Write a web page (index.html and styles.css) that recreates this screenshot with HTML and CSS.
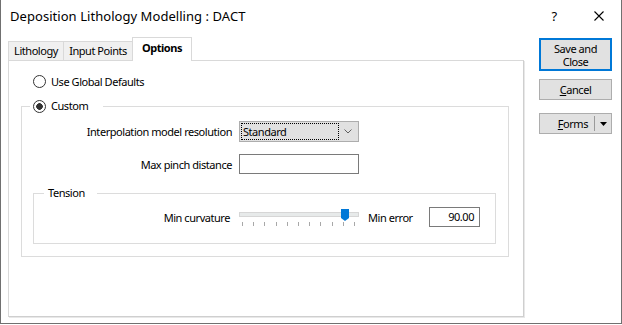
FILE: index.html
```html
<!DOCTYPE html>
<html lang="en">
<head>
    <meta charset="UTF-8">
    <title>Deposition Lithology Modelling : DACT</title>
    <link rel="stylesheet" href="styles.css">
</head>
<body>

    <div class="window">
        <div class="titlebar">
            <span class="title">Deposition Lithology Modelling : DACT</span>
            <span class="help">?</span>
            <span class="close">
                <svg width="10" height="10" viewBox="0 0 10 10"><path d="M0.5 0.5 L9.5 9.5 M9.5 0.5 L0.5 9.5" stroke="#000" stroke-width="1.1" fill="none"/></svg>
            </span>
        </div>

        <div class="content">
            <div class="tabs-area">
                <div class="tab-strip">
                    <div class="tab tab-lithology">Lithology</div>
                    <div class="tab tab-points">Input Points</div>
                    <div class="tab tab-options active">Options</div>
                </div>

                <div class="panel">
                    <div class="radio-row">
                        <span class="radio"></span>Use Global Defaults
                    </div>

                    <fieldset class="group custom">
                        <legend><span class="radio checked"></span>Custom</legend>

                        <div class="form-row first">
                            <span class="label">Interpolation model resolution</span>
                            <div class="select">
                                <span class="focus">Standard</span>
                                <span class="chevron">
                                    <svg width="8" height="5" viewBox="0 0 8 5"><path d="M0.5 0.5 L4 4 L7.5 0.5" stroke="#606060" fill="none"/></svg>
                                </span>
                            </div>
                        </div>

                        <div class="form-row second">
                            <span class="label">Max pinch distance</span>
                            <div class="textbox"></div>
                        </div>

                        <fieldset class="group tension">
                            <legend>Tension</legend>
                            <div class="tension-row">
                                <span class="slider-label">Min curvature</span>
                                <div class="slider">
                                    <div class="track"></div>
                                    <svg class="thumb" width="8" height="12" viewBox="0 0 8 12"><path d="M0 0 H8 V9 L4 12 L0 9 Z" fill="#0078d7"/></svg>
                                    <div class="ticks">
                                        <span></span><span></span><span></span><span></span><span></span><span></span>
                                        <span></span><span></span><span></span><span></span><span></span>
                                    </div>
                                </div>
                                <span class="error-label">Min error</span>
                                <div class="textbox value">90.00</div>
                            </div>
                        </fieldset>
                    </fieldset>
                </div>
            </div>

            <div class="buttons">
                <div class="button default">
                    <span class="line">Save and</span>
                    <span class="line">Close</span>
                </div>
                <div class="button cancel"><u>C</u>ancel</div>
                <div class="button forms">
                    <span class="forms-label"><u>F</u>orms</span>
                    <span class="sep"></span>
                    <span class="arrow">
                        <svg width="7" height="4" viewBox="0 0 7 4"><path d="M0 0 H7 L3.5 4 Z" fill="#000"/></svg>
                    </span>
                </div>
            </div>
        </div>
    </div>

</body>
</html>
```

FILE: styles.css
```css
body {
    margin: 0;
    padding: 0;
    background-color: #fff;
    font-family: "Noto Sans", "Open Sans", sans-serif;
    font-size: 11px;
    letter-spacing: -0.45px;
    color: #000;
}

.window {
    width: 622px;
    height: 324px;
    box-sizing: border-box;
    border: 1px solid #707070;
    border-top: none;
    background-color: #fff;
}

.titlebar {
    display: flex;
    align-items: center;
    height: 37px;
    box-sizing: border-box;
    padding-bottom: 5px;
}

.title {
    flex: 1;
    margin-left: 9px;
    font-size: 13px;
    letter-spacing: 0.05px;
}

.help {
    width: 20px;
    text-align: center;
    font-size: 13px;
}

.close {
    width: 20px;
    margin-left: 25px;
    margin-right: 12px;
    display: flex;
    justify-content: center;
}

.content {
    display: flex;
}

.tabs-area {
    margin-left: 7px;
    width: 516px;
}

.tab-strip {
    display: flex;
    align-items: flex-end;
    height: 23px;
}

.tab {
    box-sizing: border-box;
    height: 19px;
    line-height: 17px;
    border: 1px solid #d9d9d9;
    border-bottom: none;
    background-color: #f0f0f0;
    text-align: center;
}

.tab-lithology {
    width: 56px;
}

.tab-points {
    width: 70px;
    margin-left: -1px;
}

.tab-options {
    width: 60px;
    margin-left: -1px;
}

.tab.active {
    position: relative;
    height: 24px;
    line-height: 20px;
    margin-bottom: -1px;
    background-color: #fff;
    font-weight: bold;
}

.panel {
    box-sizing: border-box;
    height: 257px;
    border: 1px solid #d9d9d9;
    border-right-color: #cfcfcf;
    border-bottom-color: #cfcfcf;
    box-shadow: 1px 1px 0 #e8e8e8;
    padding-top: 12px;
}

.radio {
    display: inline-block;
    box-sizing: border-box;
    width: 13px;
    height: 13px;
    border: 1px solid #333;
    border-radius: 50%;
    background-color: #fff;
    margin-right: 5px;
}

.radio.checked {
    background: radial-gradient(circle, #333 0 3px, #fff 3.6px);
}

.radio-row {
    display: flex;
    align-items: center;
    height: 16px;
    padding-left: 24px;
}

.group {
    margin: 0;
    padding: 0;
    border: 1px solid #dcdcdc;
    min-width: 0;
}

.group legend {
    display: flex;
    align-items: center;
    height: 14px;
    line-height: 14px;
}

.custom {
    margin: 10px 14px 0 12px;
}

.custom > legend {
    margin-left: 8px;
    padding: 0 15px 0 3px;
}

.form-row {
    display: flex;
    align-items: center;
}

.form-row.first {
    margin-top: 8px;
}

.form-row.second {
    margin-top: 12px;
}

.label {
    width: 210px;
    margin-right: 7px;
    text-align: right;
}

.select {
    display: flex;
    align-items: center;
    box-sizing: border-box;
    width: 120px;
    height: 21px;
    padding: 1px;
    border: 1px solid #adadad;
    background-color: #e1e1e1;
}

.focus {
    box-sizing: border-box;
    width: 98px;
    height: 17px;
    line-height: 15px;
    padding-left: 1px;
    border: 1px dotted #000;
}

.chevron {
    flex: 1;
    display: flex;
    justify-content: center;
}

.textbox {
    box-sizing: border-box;
    width: 120px;
    height: 20px;
    border: 1px solid #7a7a7a;
    background-color: #fff;
}

.tension {
    margin: 12px 12px 12px 11px;
    padding-bottom: 16px;
}

.tension > legend {
    margin-left: 10px;
    padding: 0 12px 0 4px;
}

.tension-row {
    display: flex;
    align-items: center;
    margin-top: 7px;
    height: 20px;
}

.slider-label {
    width: 196px;
    margin-right: 9px;
    text-align: right;
}

.slider {
    position: relative;
    width: 120px;
    height: 20px;
    margin-right: 9px;
}

.track {
    box-sizing: border-box;
    margin-top: 5px;
    height: 5px;
    border: 1px solid #d6d6d6;
    background-color: #e7eaea;
}

.thumb {
    position: absolute;
    left: 102px;
    top: 2px;
}

.ticks {
    display: flex;
    justify-content: space-between;
    margin-top: 5px;
    padding: 0 4px 0 3px;
}

.ticks span {
    width: 1px;
    height: 4px;
    background-color: #a8a8a8;
}

.error-label {
    width: 61px;
}

.textbox.value {
    width: 51px;
    line-height: 18px;
    text-align: right;
    padding-right: 5px;
}

.buttons {
    display: flex;
    flex-direction: column;
    margin-left: 15px;
    padding-top: 1px;
    width: 73px;
}

.button {
    box-sizing: border-box;
    height: 21px;
    line-height: 19px;
    border: 1px solid #adadad;
    background-color: #e1e1e1;
    text-align: center;
}

.button.default {
    display: flex;
    flex-direction: column;
    justify-content: center;
    height: 33px;
    border: 2px solid #0078d7;
    line-height: 13px;
}

.button.default .line {
    height: 13px;
}

.button.cancel {
    margin-top: 8px;
}

.button.forms {
    display: flex;
    align-items: center;
    margin-top: 13px;
}

.forms-label {
    width: 54px;
    text-align: right;
    padding-right: 6px;
    box-sizing: border-box;
}

.sep {
    width: 1px;
    height: 15px;
    background-color: #9a9a9a;
}

.arrow {
    flex: 1;
    display: flex;
    justify-content: center;
}
```
